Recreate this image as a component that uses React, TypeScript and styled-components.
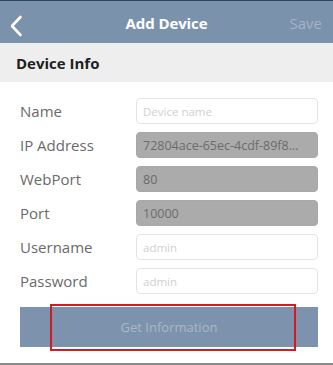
import React from "react";
import styled, { createGlobalStyle } from "styled-components";

const Global = createGlobalStyle`
  html, body { margin: 0; padding: 0; background: #ffffff; }
  body { font-family: "Helvetica Neue", "Liberation Sans", Arial, sans-serif; }
`;

const Screen = styled.div`
  width: 333px;
  height: 365px;
  display: flex;
  flex-direction: column;
  background: #fff;
  position: relative;
  overflow: hidden;
  box-sizing: border-box;
  border-bottom: 2px solid #8a8a8a;
`;

const NavBar = styled.div`
  height: 42px;
  border-top: 1px solid #34435a;
  background: #7b92ac;
  display: grid;
  grid-template-columns: 60px 1fr 60px;
  align-items: center;
  flex-shrink: 0;
`;

const BackButton = styled.div`
  display: flex;
  align-items: center;
  padding-left: 9px;
  padding-top: 8px;
  height: 100%;
  box-sizing: border-box;
`;

const Title = styled.div`
  text-align: center;
  color: #ffffff;
  font-size: 15px;
  font-weight: 700;
  font-family: "Open Sans", "Liberation Sans", sans-serif;
  letter-spacing: -0.1px;
  padding-top: 2px;
`;

const SaveButton = styled.div`
  text-align: right;
  padding-right: 11px;
  padding-top: 2px;
  color: #a2b4c7;
  font-size: 15px;
  font-family: "Open Sans", "Liberation Sans", sans-serif;
`;

const SectionHeader = styled.div`
  height: 39px;
  background: #eeeeee;
  display: flex;
  align-items: center;
  padding-left: 16px;
  font-size: 15px;
  font-weight: 700;
  color: #1e1e1e;
  font-family: "Open Sans", "Liberation Sans", sans-serif;
  flex-shrink: 0;
`;

const Form = styled.div`
  display: flex;
  flex-direction: column;
  gap: 8px;
  padding: 16px 15px 0 20px;
`;

const Row = styled.div`
  display: grid;
  grid-template-columns: 116px 182px;
  align-items: center;
  height: 26px;
`;

const Label = styled.div`
  font-size: 15px;
  color: #6a6a6a;
  font-family: "Open Sans", "Liberation Sans", sans-serif;
`;

const Field = styled.div<{ $disabled?: boolean }>`
  height: 26px;
  box-sizing: border-box;
  border-radius: 4px;
  border: 1px solid ${(p) => (p.$disabled ? "#a8a8a8" : "#e4e4e4")};
  background: ${(p) => (p.$disabled ? "#ababab" : "#ffffff")};
  display: flex;
  align-items: center;
  padding-left: 6px;
  font-family: "Open Sans", "Liberation Sans", sans-serif;
  font-size: ${(p) => (p.$disabled ? "12.5px" : "11.5px")};
  color: ${(p) => (p.$disabled ? "#6c6c6c" : "#cfcfcf")};
  white-space: nowrap;
  overflow: hidden;
`;

const ActionButton = styled.div`
  margin: 13px 15px 0 20px;
  height: 40px;
  background: #7d93ad;
  display: flex;
  align-items: center;
  justify-content: center;
  color: #a9b7c7;
  font-size: 13px;
  font-family: "Open Sans", "Liberation Sans", sans-serif;
`;

const Highlight = styled.div`
  position: absolute;
  left: 50px;
  top: 304px;
  width: 246px;
  height: 47px;
  box-sizing: border-box;
  border: 2px solid #d71920;
  pointer-events: none;
`;

const rows: { label: string; value: string; disabled?: boolean }[] = [
  { label: "Name", value: "Device name" },
  { label: "IP Address", value: "72804ace-65ec-4cdf-89f8...", disabled: true },
  { label: "WebPort", value: "80", disabled: true },
  { label: "Port", value: "10000", disabled: true },
  { label: "Username", value: "admin" },
  { label: "Password", value: "admin" },
];

export default function App() {
  return (
    <>
      <Global />
      <Screen>
        <NavBar>
          <BackButton>
            <svg width="14" height="22" viewBox="0 0 14 22">
              <path d="M11.5 2 L3 11 L11.5 20" fill="none" stroke="#ffffff" strokeWidth="2.6" strokeLinecap="round" strokeLinejoin="round" />
            </svg>
          </BackButton>
          <Title>Add Device</Title>
          <SaveButton>Save</SaveButton>
        </NavBar>
        <SectionHeader>Device Info</SectionHeader>
        <Form>
          {rows.map((r) => (
            <Row key={r.label}>
              <Label>{r.label}</Label>
              <Field $disabled={r.disabled}>{r.value}</Field>
            </Row>
          ))}
        </Form>
        <ActionButton>Get Information</ActionButton>
        <Highlight />
      </Screen>
    </>
  );
}
